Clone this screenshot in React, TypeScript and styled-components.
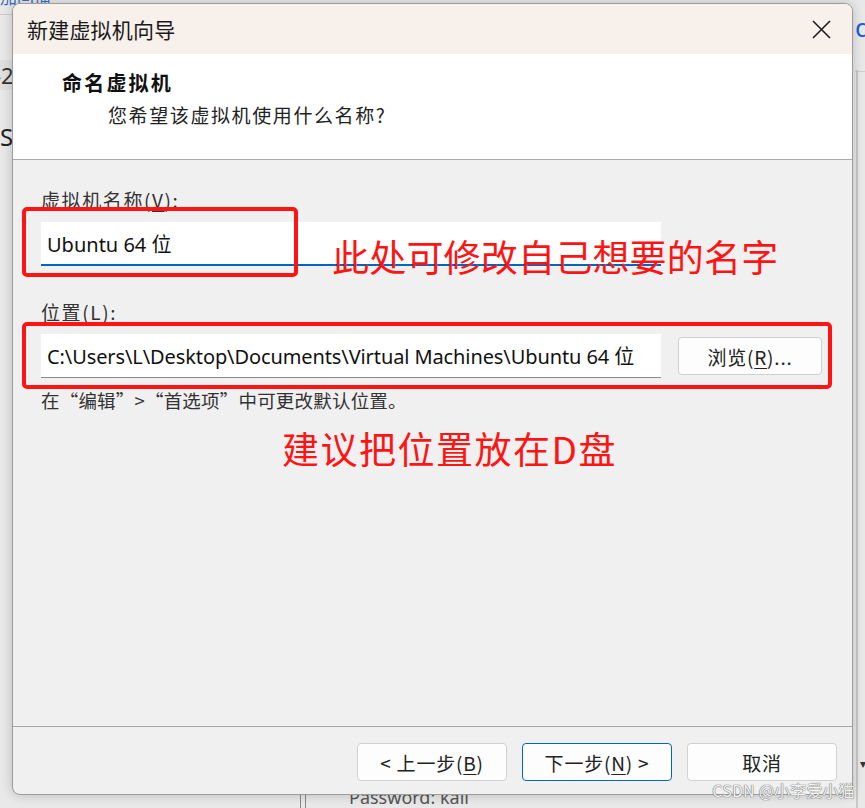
import React from "react";
import styled, { createGlobalStyle } from "styled-components";

const Global = createGlobalStyle`
  html, body { margin: 0; padding: 0; }
  body { background: #e6e6e6; font-family: "Noto Sans", "Noto Sans CJK SC", sans-serif; }
`;

const CJK = `"Noto Sans CJK SC", sans-serif`;
const UI = `"Noto Sans", "Noto Sans CJK SC", sans-serif`;

const Page = styled.div`
  position: relative;
  width: 865px;
  height: 808px;
  overflow: hidden;
  background: #e9e9e9;
  padding: 3px 0 0 12px;
  box-sizing: border-box;
`;

/* ---------- background application fragments (under the dialog) ---------- */
const BgText = styled.div<{ $x: number; $y: number; $color?: string; $size?: number }>`
  position: absolute;
  left: ${(p) => p.$x}px;
  top: ${(p) => p.$y}px;
  font-family: ${UI};
  font-size: ${(p) => p.$size ?? 22}px;
  color: ${(p) => p.$color ?? "#333"};
  white-space: nowrap;
  line-height: 1;
`;

const BgLine = styled.div<{ $x: number; $y: number; $w: number; $h: number; $c: string }>`
  position: absolute;
  left: ${(p) => p.$x}px;
  top: ${(p) => p.$y}px;
  width: ${(p) => p.$w}px;
  height: ${(p) => p.$h}px;
  background: ${(p) => p.$c};
`;

/* ---------- dialog ---------- */
const Dialog = styled.div`
  position: relative;
  width: 841px;
  height: 792px;
  box-sizing: border-box;
  border: 1px solid #9c9c9c;
  border-radius: 8px;
  overflow: hidden;
  display: flex;
  flex-direction: column;
  background: #f0f0f0;
  box-shadow: 0 0 12px rgba(0, 0, 0, 0.2);
`;

const TitleBar = styled.div`
  height: 50px;
  flex: none;
  display: flex;
  align-items: center;
  justify-content: space-between;
  background: #f8f1eb;
  padding: 0 21px 0 14px;
`;

const Title = styled.div`
  font-family: ${CJK};
  font-size: 21px;
  color: #1a1a1a;
  letter-spacing: 0.2px;
`;

const CloseBtn = styled.div`
  width: 20px;
  height: 20px;
  display: flex;
  align-items: center;
  justify-content: center;
`;

const Header = styled.div`
  height: 106px;
  flex: none;
  box-sizing: border-box;
  background: #ffffff;
  border-bottom: 1px solid #a8a8a8;
  padding: 15px 0 0 49px;
`;

const HeaderTitle = styled.div`
  font-family: ${CJK};
  font-weight: 700;
  font-size: 20px;
  color: #111;
  letter-spacing: 2.2px;
  line-height: 28px;
`;

const HeaderSub = styled.div`
  font-family: ${CJK};
  font-size: 19px;
  color: #222;
  margin: 4px 0 0 46px;
  line-height: 28px;
  letter-spacing: 1.6px;
`;

const Body = styled.div`
  flex: 1;
  padding: 27px 0 0 28px;
  display: flex;
  flex-direction: column;
`;

const Label = styled.div<{ $mt?: number }>`
  font-family: ${CJK};
  font-size: 19px;
  color: #333;
  line-height: 26px;
  margin-top: ${(p) => p.$mt ?? 0}px;
  letter-spacing: 1.6px;
`;

const U = styled.span`
  text-decoration: underline;
  text-underline-offset: 3px;
`;

const NameInput = styled.div`
  margin-top: 9px;
  width: 620px;
  height: 44px;
  box-sizing: border-box;
  background: #ffffff;
  border-bottom: 2px solid #0067c0;
  padding-left: 6px;
  display: flex;
  align-items: center;
  font-family: ${UI};
  font-size: 20px;
  color: #111;
`;

const Row = styled.div`
  margin-top: 9px;
  display: flex;
  align-items: center;
  gap: 17px;
`;

const PathInput = styled.div`
  width: 620px;
  height: 44px;
  box-sizing: border-box;
  background: #ffffff;
  border-bottom: 1px solid #8a8a8a;
  padding-left: 6px;
  display: flex;
  align-items: center;
  font-family: ${UI};
  font-size: 20px;
  letter-spacing: -0.1px;
  color: #111;
  white-space: nowrap;
  overflow: hidden;
`;

const Btn = styled.div<{ $primary?: boolean; $w?: number }>`
  width: ${(p) => p.$w ?? 150}px;
  height: 38px;
  box-sizing: border-box;
  border: 1px solid ${(p) => (p.$primary ? "#0067c0" : "#d0d0d0")};
  border-radius: 4px;
  background: #fdfdfd;
  display: flex;
  align-items: center;
  justify-content: center;
  font-family: ${CJK};
  font-size: 19px;
  color: #222;
  letter-spacing: 0.8px;
`;

const Hint = styled.div`
  margin-top: 10px;
  font-family: ${CJK};
  font-size: 18.5px;
  color: #333;
  line-height: 24px;
  letter-spacing: 0.2px;
`;

const Footer = styled.div`
  height: 68px;
  flex: none;
  box-sizing: border-box;
  border-top: 1px solid #a8a8a8;
  display: flex;
  justify-content: flex-end;
  align-items: flex-start;
  gap: 15px;
  padding: 16px 15px 0 0;
`;

/* ---------- annotations (drawn over the screenshot) ---------- */
const RedBox = styled.div<{ $x: number; $y: number; $w: number; $h: number }>`
  position: absolute;
  left: ${(p) => p.$x}px;
  top: ${(p) => p.$y}px;
  width: ${(p) => p.$w}px;
  height: ${(p) => p.$h}px;
  box-sizing: border-box;
  border: 4px solid #ff1414;
  border-radius: 5px;
`;

const RedNote = styled.div<{ $x: number; $y: number; $ls?: number }>`
  position: absolute;
  left: ${(p) => p.$x}px;
  top: ${(p) => p.$y}px;
  font-family: ${CJK};
  font-size: 37px;
  line-height: 44px;
  letter-spacing: ${(p) => p.$ls ?? 0}px;
  color: #ff1414;
  white-space: nowrap;
`;

const Watermark = styled.div`
  position: absolute;
  right: 10px;
  bottom: 6px;
  font-family: ${CJK};
  font-size: 16px;
  color: rgba(255, 255, 255, 0.92);
  text-shadow: 0 0 1px #777, 0 0 1px #777, 0 0 1px #999;
  white-space: nowrap;
  letter-spacing: 0.2px;
`;

export default function App() {
  return (
    <>
      <Global />
      <Page>
        {/* background application behind the dialog */}
        <BgText $x={0} $y={-11} $color="#3a6fc0" $size={17}>加回播</BgText>
        <BgLine $x={0} $y={14} $w={12} $h={1} $c="#cfcfcf" />
        <BgLine $x={0} $y={60} $w={12} $h={30} $c="#e0e0e0" />
        <BgText $x={-6} $y={64} $size={22}>-2</BgText>
        <BgText $x={0} $y={125} $size={24} $color="#222">S</BgText>
        <BgText $x={855} $y={14} $size={26} $color="#1f5fd0">d</BgText>
        <BgLine $x={855} $y={71} $w={10} $h={1} $c="#cfcfcf" />
        <BgLine $x={856} $y={70} $w={2} $h={738} $c="#c8c8c8" />
        <BgText $x={860} $y={758} $size={12} $color="#333">▾</BgText>
        <BgLine $x={300} $y={795} $w={1} $h={13} $c="#888" />
        <BgLine $x={305} $y={795} $w={1} $h={13} $c="#888" />
        <BgText $x={349} $y={788} $size={18} $color="#555">Password: kali</BgText>

        <Dialog>
          <TitleBar>
            <Title>新建虚拟机向导</Title>
            <CloseBtn>
              <svg width="19" height="19" viewBox="0 0 19 19">
                <path d="M1 1 L18 18 M18 1 L1 18" stroke="#1b1b1b" strokeWidth="1.6" fill="none" />
              </svg>
            </CloseBtn>
          </TitleBar>

          <Header>
            <HeaderTitle>命名虚拟机</HeaderTitle>
            <HeaderSub>您希望该虚拟机使用什么名称?</HeaderSub>
          </Header>

          <Body>
            <Label>
              虚拟机名称(<U>V</U>):
            </Label>
            <NameInput>Ubuntu 64 位</NameInput>

            <Label $mt={33}>
              位置(<U>L</U>):
            </Label>
            <Row>
              <PathInput>C:\Users\L\Desktop\Documents\Virtual Machines\Ubuntu 64 位</PathInput>
              <Btn $w={144}>
                浏览(<U>R</U>)...
              </Btn>
            </Row>
            <Hint>在“编辑”&gt;“首选项”中可更改默认位置。</Hint>
          </Body>

          <Footer>
            <Btn>
              &lt; 上一步(<U>B</U>)
            </Btn>
            <Btn $primary>
              下一步(<U>N</U>) &gt;
            </Btn>
            <Btn>取消</Btn>
          </Footer>
        </Dialog>

        <RedBox $x={22} $y={207} $w={276} $h={70} />
        <RedBox $x={22} $y={322} $w={810} $h={67} />
        <RedNote $x={332} $y={234} $ls={0.2}>此处可修改自己想要的名字</RedNote>
        <RedNote $x={282} $y={426} $ls={1.5}>建议把位置放在D盘</RedNote>

        <Watermark>CSDN @小李爱小猫</Watermark>
      </Page>
    </>
  );
}
